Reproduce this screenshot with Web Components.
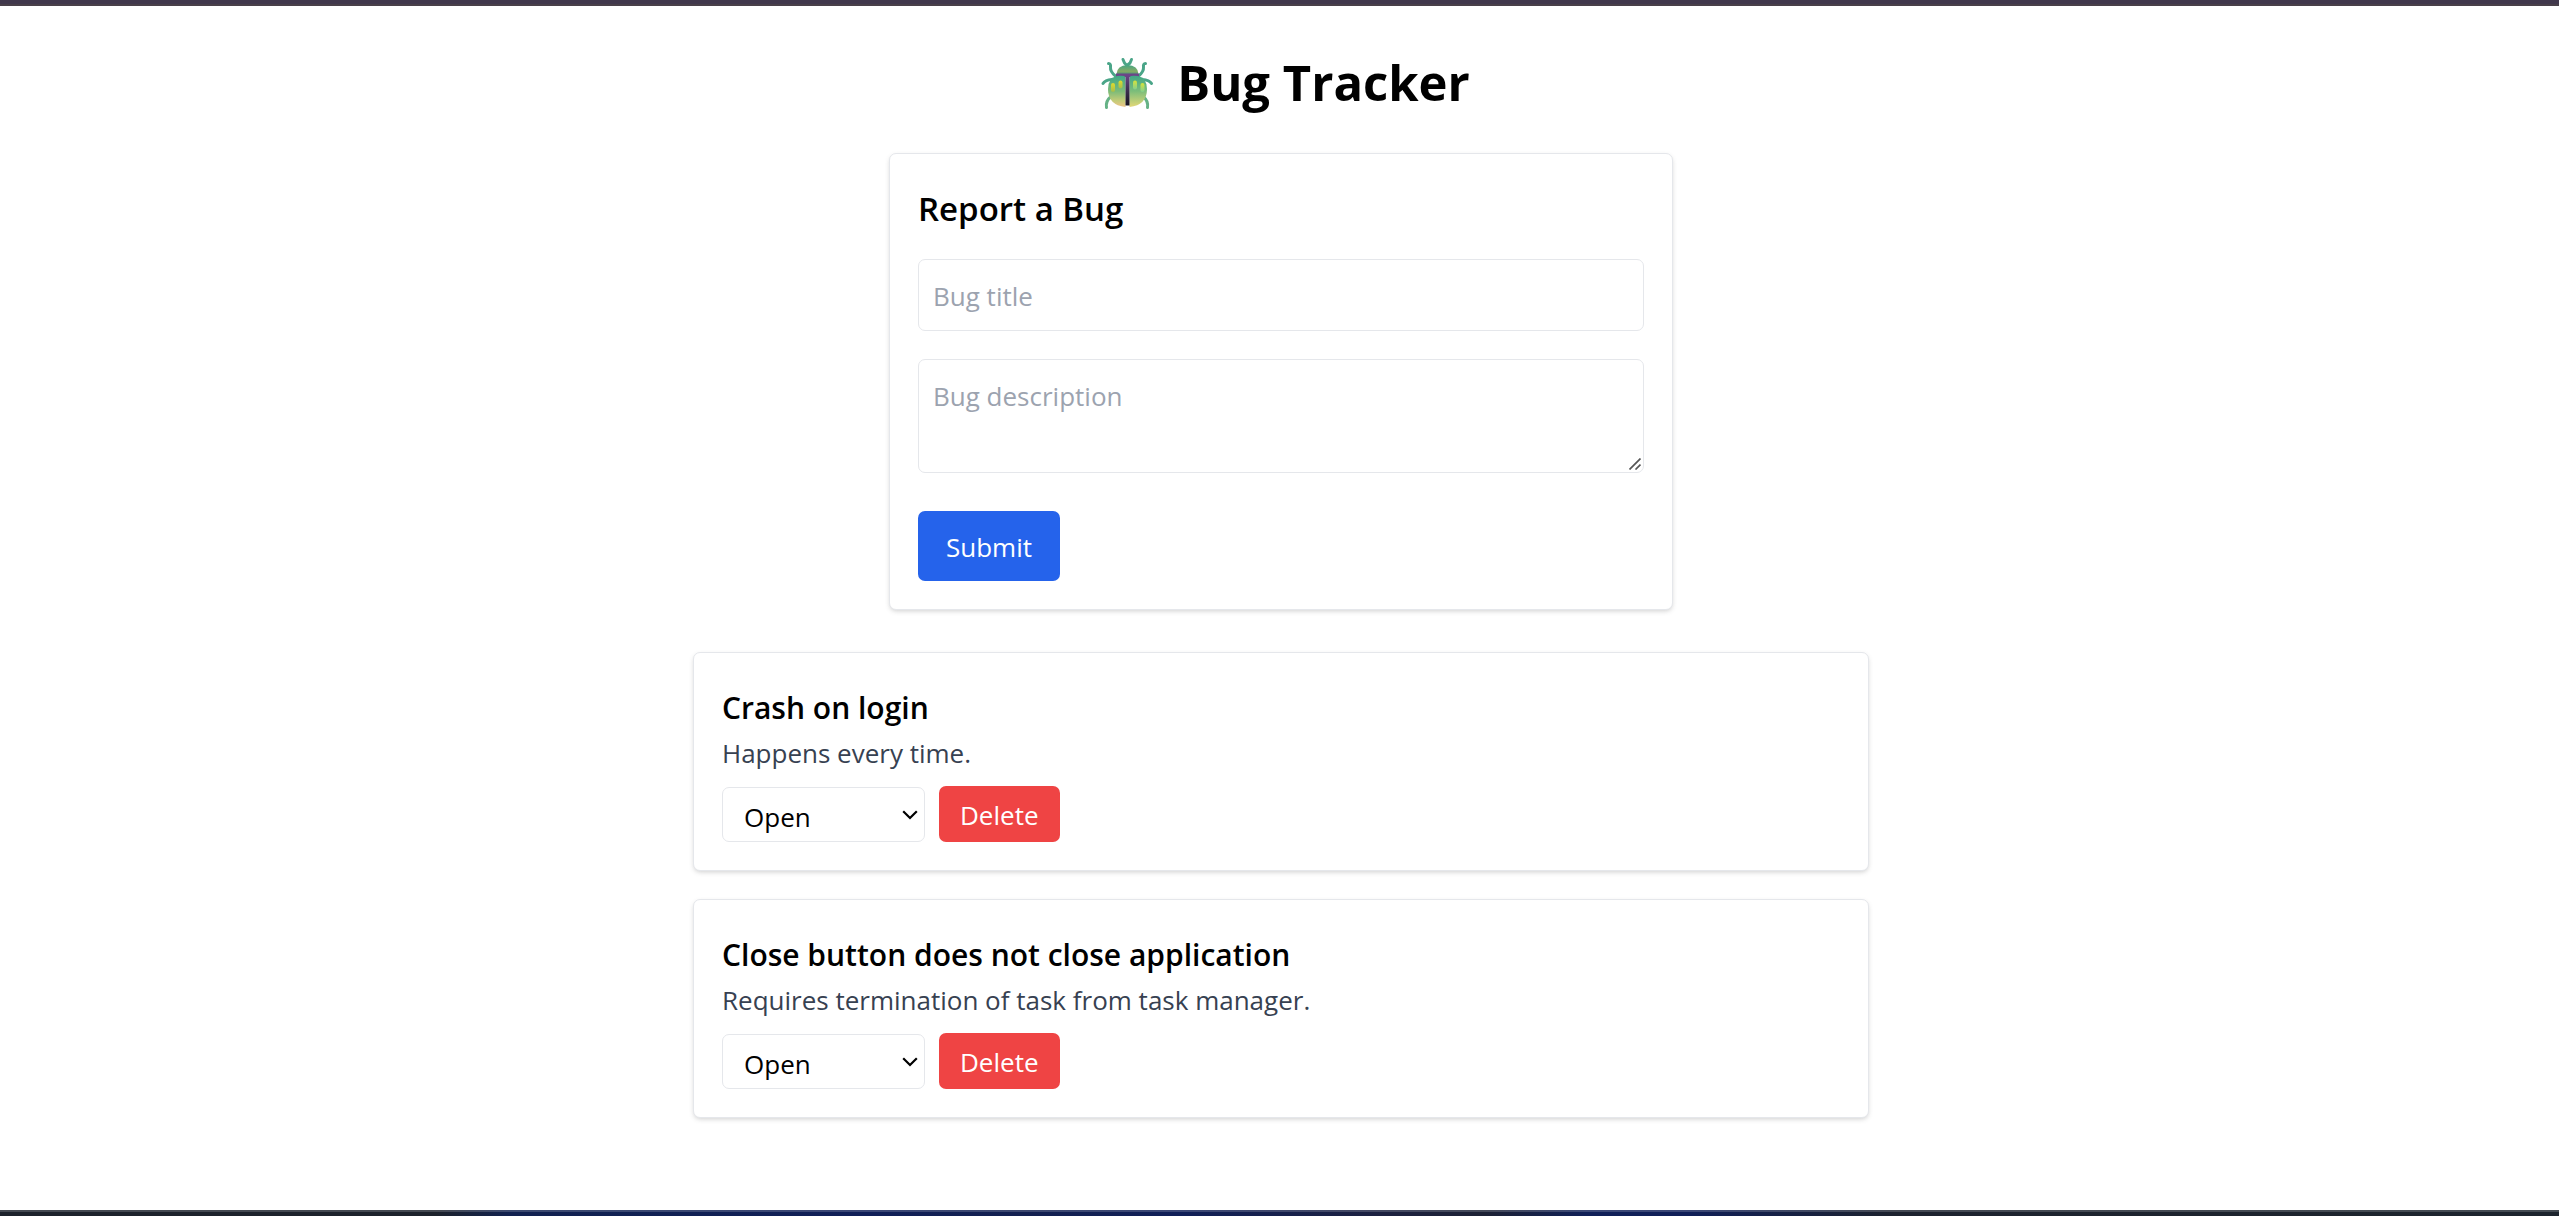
<!DOCTYPE html>
<html lang="en">
<head>
<meta charset="utf-8">
<title>Bug Tracker</title>
<style>
  html, body { margin: 0; height: 100%; }
  body {
    background: #fff;
    color: #000;
    font-family: "Open Sans", "Noto Sans", sans-serif;
    font-size: 26px;
    line-height: 42px;
    --line: #e5e7eb;
    --shadow: 0 2px 5px rgba(0, 0, 0, .1), 0 2px 4px -2px rgba(0, 0, 0, .1);
  }
</style>
</head>
<body>
<bug-app></bug-app>

<template id="app-tpl">
  <style>
    :host { display: flex; flex-direction: column; min-height: 100vh; }
    .top { height: 6px; box-sizing: border-box; background: #41384c; border-bottom: 2px solid #494049; }
    .bottom {
      height: 6px; box-sizing: border-box; border-top: 2px solid rgba(255, 255, 255, .18);
      background: linear-gradient(90deg, #1c222b 0%, #1c222b 17%, #112150 20%, #101f58 34%, #132050 40%, #101f58 46%, #1c2140 54%, #1c2134 58%, #102058 62%, #101f58 66%, #1c222e 74%, #1c242d 100%) border-box;
    }
    main { flex: 1; padding: 42px 0 42px 3px; display: flex; flex-direction: column; align-items: center; }
    .list { width: 100%; max-width: 1176px; margin-top: 42px; display: flex; flex-direction: column; gap: 28px; }
  </style>
  <div class="top"></div>
  <main>
    <bug-heading>Bug Tracker</bug-heading>
    <bug-form></bug-form>
    <div class="list">
      <bug-item><span slot="title">Crash on login</span><span slot="text">Happens every time.</span></bug-item>
      <bug-item><span slot="title">Close button does not close application</span><span slot="text">Requires termination of task from task manager.</span></bug-item>
    </div>
  </main>
  <div class="bottom"></div>
</template>

<template id="heading-tpl">
  <style>
    :host { display: block; margin-bottom: 42px; }
    h1 { margin: 0; padding-top: 6px; display: flex; align-items: center; gap: 15px; font-size: 49px; line-height: 57px; font-weight: 700; }
    svg { width: 70px; height: 54px; flex: none; }
  </style>
  <h1>
    <svg viewBox="0 0 70 54" aria-hidden="true">
      <defs>
        <linearGradient id="shell" x1="0" y1="0" x2="0" y2="1"><stop offset="0" stop-color="#3fa886"/><stop offset=".5" stop-color="#7dbb78"/><stop offset=".8" stop-color="#c4cc78"/><stop offset="1" stop-color="#eec488"/></linearGradient>
        <linearGradient id="shellR" x1="0" y1="0" x2="0" y2="1"><stop offset="0" stop-color="#3fa886"/><stop offset=".5" stop-color="#7dbe7a"/><stop offset="1" stop-color="#e3d877"/></linearGradient>
        <linearGradient id="head" x1="0" y1="0" x2="0" y2="1"><stop offset="0" stop-color="#45a583"/><stop offset=".7" stop-color="#86ab64"/><stop offset="1" stop-color="#519a72"/></linearGradient>
        <linearGradient id="seam" x1="0" y1="0" x2="0" y2="1"><stop offset="0" stop-color="#6c4688"/><stop offset=".5" stop-color="#3d3050"/><stop offset="1" stop-color="#171321"/></linearGradient>
        <linearGradient id="spot" x1="0" y1="0" x2="0" y2="1"><stop offset="0" stop-color="#e0dc2e"/><stop offset="1" stop-color="#a5bd4c"/></linearGradient>
        <linearGradient id="spotR" x1="0" y1="0" x2="0" y2="1"><stop offset="0" stop-color="#d9e338"/><stop offset="1" stop-color="#82d08e"/></linearGradient>
      </defs>
      <g fill="none" stroke="#4aa588" stroke-width="3" stroke-linecap="round" stroke-linejoin="round">
        <path d="M31 3.500L32.500 7L35 9.500M39.500 3.500L38 7L35 9.500"/>
        <path d="M16.500 7.500Q19 7.500 18.500 11Q18 16 24 20.500M53.500 7.500Q51 7.500 51.500 11Q52 16 46 20.500"/>
        <path d="M11 27.500Q13 24 20 23.500M59.500 27.500Q57.500 24 50 23.500"/>
        <path d="M14.500 51.500Q13.500 45 18.500 41M55.500 51.500Q56.500 45 51.500 41" stroke="#65b286"/>
      </g>
      <path d="M24.500 18Q25 9.500 35.500 9Q46 9.500 46.500 18Z" fill="url(#head)"/>
      <path d="M24 17.500H47V21H24Z" fill="#6c4688"/>
      <path d="M25 20Q32 19 33.500 21V51Q16 49 16 33Q16 22 25 20Z" fill="url(#shell)"/>
      <path d="M46 20Q39 19 37.500 21V51Q55 49 55 33Q55 22 46 20Z" fill="url(#shellR)"/>
      <path d="M33.500 19H37.500V49.500H33.500Z" fill="url(#seam)"/>
      <g fill="url(#spot)"><rect x="19" y="27" width="4" height="9" rx="2"/><rect x="26.500" y="24.500" width="4" height="8" rx="2"/></g>
      <g fill="url(#spotR)"><rect x="41" y="24.500" width="4" height="9" rx="2"/><rect x="48.500" y="27" width="4" height="9" rx="2"/></g>
    </svg>
    <slot></slot>
  </h1>
</template>

<template id="card-tpl">
  <style>
    :host { display: block; box-sizing: border-box; width: 100%; padding: 28px; border: 1px solid var(--line); border-radius: 7px; background: #fff; box-shadow: var(--shadow); }
  </style>
  <slot></slot>
</template>

<template id="form-tpl">
  <style>
    :host { display: block; width: 100%; max-width: 784px; }
    form { display: flex; flex-direction: column; align-items: flex-start; gap: 28px; }
    h2 { margin: 0; padding-top: 4px; font-size: 33px; line-height: 45px; font-weight: 600; }
    input, textarea { display: block; box-sizing: border-box; width: 100%; margin: 0; padding: 15px 14px 13px; border: 1px solid var(--line); border-radius: 7px; background: #fff; font: inherit; color: inherit; outline: none; }
    input { height: 72px; }
    textarea { height: 114px; resize: none; }
    ::placeholder { color: #9ca3af; opacity: 1; }
    .area { display: grid; width: 100%; margin-bottom: 10px; }
    .area > * { grid-area: 1 / 1; }
    .area svg { width: 12px; height: 12px; place-self: end; margin: 3px; pointer-events: none; }
    button { margin: 0; padding: 15px 28px 13px; border: 0; border-radius: 7px; background: #2563eb; color: #fff; font: inherit; cursor: pointer; }
  </style>
  <bug-card>
    <form onsubmit="return false">
      <h2>Report a Bug</h2>
      <input type="text" placeholder="Bug title" aria-label="Bug title">
      <div class="area">
        <textarea placeholder="Bug description" aria-label="Bug description"></textarea>
        <svg viewBox="0 0 12 12" aria-hidden="true"><path d="M.5 11.500L11.500 .5M6.500 11.500L11.500 6.500" stroke="#555" stroke-width="1.700" fill="none"/></svg>
      </div>
      <button type="submit">Submit</button>
    </form>
  </bug-card>
</template>

<template id="item-tpl">
  <style>
    :host { display: block; }
    h3 { margin: 0; padding-top: 2px; font-size: 30px; line-height: 49px; font-weight: 600; }
    p { margin: 0; color: #374151; }
    .row { display: flex; align-items: flex-end; gap: 14px; margin-top: 12px; }
    .pick { display: grid; width: 203px; }
    .pick > * { grid-area: 1 / 1; }
    select { appearance: none; box-sizing: border-box; width: 100%; height: 55px; margin: 0; padding: 4px 21px 0; border: 1px solid var(--line); border-radius: 7px; background: #fff; color: #000; font: inherit; }
    .pick svg { width: 16px; height: 10px; place-self: center end; margin-right: 7px; pointer-events: none; }
    button { margin: 0; padding: 8px 21px 6px; border: 0; border-radius: 7px; background: #ef4444; color: #fff; font: inherit; cursor: pointer; }
  </style>
  <bug-card>
    <h3><slot name="title"></slot></h3>
    <p><slot name="text"></slot></p>
    <div class="row">
      <div class="pick">
        <select aria-label="Status"><option>Open</option><option>In Progress</option><option>Closed</option></select>
        <svg viewBox="0 0 16 10" aria-hidden="true"><path d="M1.200 1.200L8 8L14.800 1.200" fill="none" stroke="#000" stroke-width="2.200"/></svg>
      </div>
      <button type="button">Delete</button>
    </div>
  </bug-card>
</template>

<script>
  const define = (name, id) => customElements.define(name, class extends HTMLElement {
    constructor() {
      super();
      this.attachShadow({ mode: 'open' }).append(document.getElementById(id).content.cloneNode(true));
    }
  });
  define('bug-card', 'card-tpl');
  define('bug-heading', 'heading-tpl');
  define('bug-form', 'form-tpl');
  define('bug-item', 'item-tpl');
  define('bug-app', 'app-tpl');
</script>
</body>
</html>
